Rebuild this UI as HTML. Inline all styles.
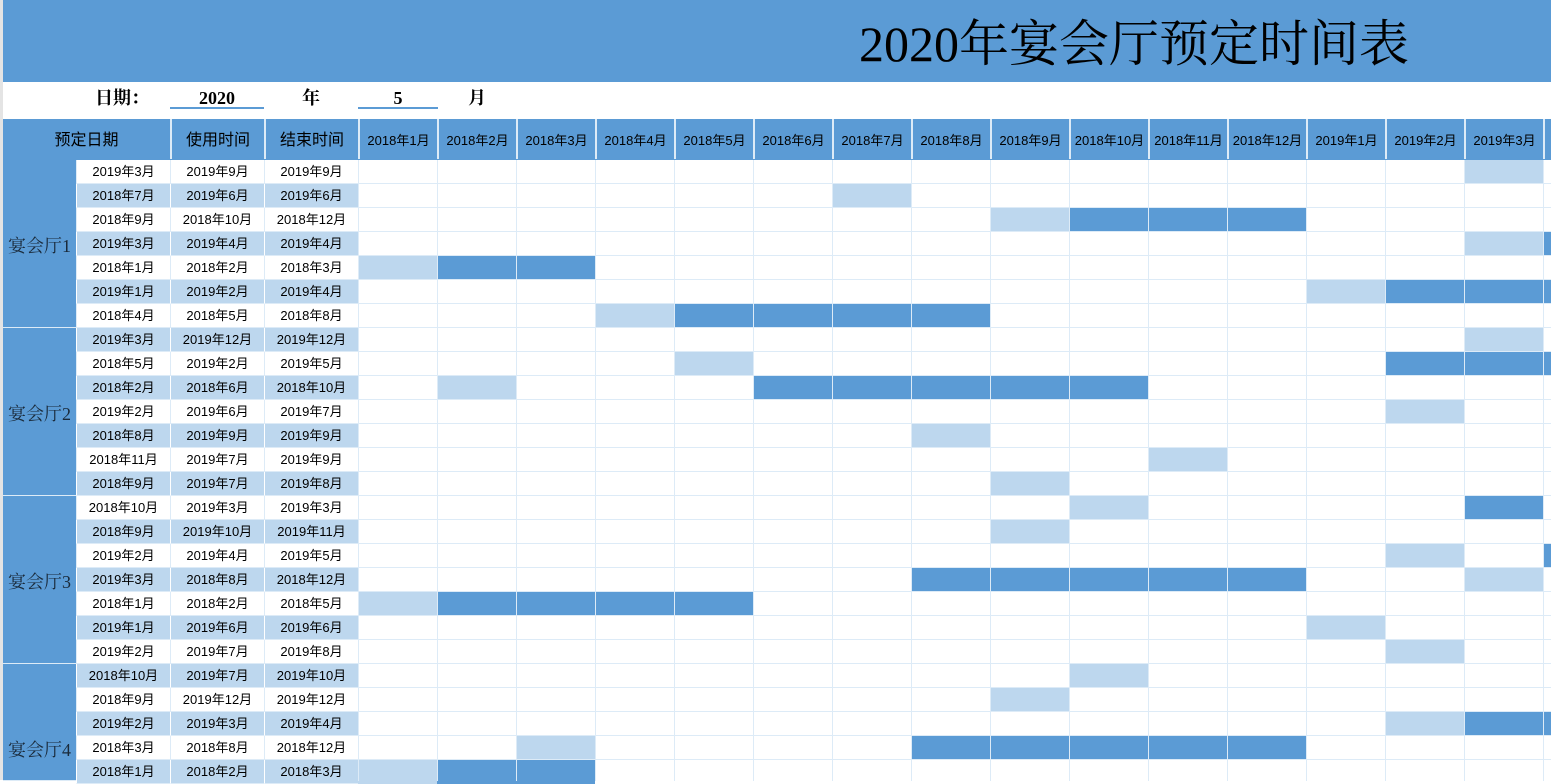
<!DOCTYPE html>
<html><head><meta charset="utf-8"><style>
*{margin:0;padding:0;box-sizing:border-box}
body{width:1551px;height:780px;overflow:hidden;background:#fff;position:relative;font-family:"Liberation Sans","Noto Sans CJK SC",sans-serif;color:#000}
.abs{position:absolute}
#title{left:0;top:0;width:1551px;height:82px;background:#5B9BD5}
#title span{position:absolute;left:859px;top:9px;font-family:"Liberation Serif","Noto Serif CJK SC",serif;font-size:50px;line-height:70px;white-space:nowrap}
#strip{left:0;top:0;width:3px;height:780px;background:#e4e4e4;z-index:5}
.d{font-family:"Liberation Serif","Noto Serif CJK SC",serif;font-weight:bold;font-size:18px;top:84px;line-height:28px}
.ul{height:2px;background:#5B9BD5;top:107px}
#hdr{left:3px;top:119px;width:1548px;height:41px;background:#5B9BD5}
.h{position:absolute;top:119px;height:40px;line-height:44px;text-align:center;font-size:16px;border-left:2px solid #DDEBF7}
.m{font-size:13px}
#gantt{left:358px;top:160px;width:1193px;height:621px}
#grid{position:absolute;left:0;top:0;width:1193px;height:621px;z-index:2;background:
repeating-linear-gradient(to right,#DDEBF7 0 1px,transparent 1px 79px),
repeating-linear-gradient(to bottom,transparent 0 23px,#DDEBF7 23px 24px)}
.b{position:absolute;width:79px;height:24px}
.L{background:#BDD7EE}.D{background:#5B9BD5}
.hall{position:absolute;left:3px;width:73px;background:#5B9BD5;border-bottom:1px solid #DDEBF7;font-family:"Liberation Serif","Noto Serif CJK SC",serif;font-size:18px;color:#1a2a3a}
.hall span{position:absolute;left:5px}
</style></head><body>
<div id="strip" class="abs"></div>
<div id="title" class="abs"><span>2020年宴会厅预定时间表</span></div>
<div class="abs d" style="left:95px">日期：</div>
<div class="abs d" style="left:170px;width:94px;text-align:center">2020</div>
<div class="abs ul" style="left:170px;width:94px"></div>
<div class="abs d" style="left:302px">年</div>
<div class="abs d" style="left:358px;width:80px;text-align:center">5</div>
<div class="abs ul" style="left:358px;width:80px"></div>
<div class="abs d" style="left:468px">月</div>
<div id="hdr" class="abs"></div>
<div class="h" style="left:3px;width:167px;border-left:none">预定日期</div>
<div class="h" style="left:170px;width:94px">使用时间</div>
<div class="h" style="left:264px;width:94px">结束时间</div>
<div class="h m" style="left:358px;width:79px">2018年1月</div>
<div class="h m" style="left:437px;width:79px">2018年2月</div>
<div class="h m" style="left:516px;width:79px">2018年3月</div>
<div class="h m" style="left:595px;width:79px">2018年4月</div>
<div class="h m" style="left:674px;width:79px">2018年5月</div>
<div class="h m" style="left:753px;width:79px">2018年6月</div>
<div class="h m" style="left:832px;width:79px">2018年7月</div>
<div class="h m" style="left:911px;width:79px">2018年8月</div>
<div class="h m" style="left:990px;width:79px">2018年9月</div>
<div class="h m" style="left:1069px;width:79px">2018年10月</div>
<div class="h m" style="left:1148px;width:79px">2018年11月</div>
<div class="h m" style="left:1227px;width:79px">2018年12月</div>
<div class="h m" style="left:1306px;width:79px">2019年1月</div>
<div class="h m" style="left:1385px;width:79px">2019年2月</div>
<div class="h m" style="left:1464px;width:79px">2019年3月</div>
<div class="h m" style="left:1543px;width:79px"></div>

<div class="hall" style="top:160px;height:168px"><span style="top:72px">宴会厅1</span></div>
<div class="hall" style="top:328px;height:168px"><span style="top:72px">宴会厅2</span></div>
<div class="hall" style="top:496px;height:168px"><span style="top:72px">宴会厅3</span></div>
<div class="hall" style="top:664px;height:117px"><span style="top:72px">宴会厅4</span></div>

<div class="abs" style="left:76px;top:160px;width:282px">
<style>.r{position:relative;height:24px}.r div{position:absolute;top:0;height:24px;line-height:24px;width:94px;text-align:center;font-size:13px;border-left:1px solid #DDEBF7;border-bottom:1px solid #DDEBF7}.r div:nth-child(1){left:0}.r div:nth-child(2){left:94px}.r div:nth-child(3){left:188px}.r.l div{background:#BDD7EE;border-left:1px solid #fff}</style>
<div class="r"><div>2019年3月</div><div>2019年9月</div><div>2019年9月</div></div>
<div class="r l"><div>2018年7月</div><div>2019年6月</div><div>2019年6月</div></div>
<div class="r"><div>2018年9月</div><div>2018年10月</div><div>2018年12月</div></div>
<div class="r l"><div>2019年3月</div><div>2019年4月</div><div>2019年4月</div></div>
<div class="r"><div>2018年1月</div><div>2018年2月</div><div>2018年3月</div></div>
<div class="r l"><div>2019年1月</div><div>2019年2月</div><div>2019年4月</div></div>
<div class="r"><div>2018年4月</div><div>2018年5月</div><div>2018年8月</div></div>
<div class="r l"><div>2019年3月</div><div>2019年12月</div><div>2019年12月</div></div>
<div class="r"><div>2018年5月</div><div>2019年2月</div><div>2019年5月</div></div>
<div class="r l"><div>2018年2月</div><div>2018年6月</div><div>2018年10月</div></div>
<div class="r"><div>2019年2月</div><div>2019年6月</div><div>2019年7月</div></div>
<div class="r l"><div>2018年8月</div><div>2019年9月</div><div>2019年9月</div></div>
<div class="r"><div>2018年11月</div><div>2019年7月</div><div>2019年9月</div></div>
<div class="r l"><div>2018年9月</div><div>2019年7月</div><div>2019年8月</div></div>
<div class="r"><div>2018年10月</div><div>2019年3月</div><div>2019年3月</div></div>
<div class="r l"><div>2018年9月</div><div>2019年10月</div><div>2019年11月</div></div>
<div class="r"><div>2019年2月</div><div>2019年4月</div><div>2019年5月</div></div>
<div class="r l"><div>2019年3月</div><div>2018年8月</div><div>2018年12月</div></div>
<div class="r"><div>2018年1月</div><div>2018年2月</div><div>2018年5月</div></div>
<div class="r l"><div>2019年1月</div><div>2019年6月</div><div>2019年6月</div></div>
<div class="r"><div>2019年2月</div><div>2019年7月</div><div>2019年8月</div></div>
<div class="r l"><div>2018年10月</div><div>2019年7月</div><div>2019年10月</div></div>
<div class="r"><div>2018年9月</div><div>2019年12月</div><div>2019年12月</div></div>
<div class="r l"><div>2019年2月</div><div>2019年3月</div><div>2019年4月</div></div>
<div class="r"><div>2018年3月</div><div>2018年8月</div><div>2018年12月</div></div>
<div class="r l"><div>2018年1月</div><div>2018年2月</div><div>2018年3月</div></div>
</div>

<div id="gantt" class="abs">
<div id="grid"></div>
<div class="b L" style="left:1106px;top:0px"></div>
<div class="b L" style="left:474px;top:24px"></div>
<div class="b L" style="left:632px;top:48px"></div>
<div class="b D" style="left:711px;top:48px;width:237px"></div>
<div class="b L" style="left:1106px;top:72px"></div>
<div class="b D" style="left:1185px;top:72px"></div>
<div class="b L" style="left:0px;top:96px"></div>
<div class="b D" style="left:79px;top:96px;width:158px"></div>
<div class="b L" style="left:948px;top:120px"></div>
<div class="b D" style="left:1027px;top:120px;width:166px"></div>
<div class="b L" style="left:237px;top:144px"></div>
<div class="b D" style="left:316px;top:144px;width:316px"></div>
<div class="b L" style="left:1106px;top:168px"></div>
<div class="b L" style="left:316px;top:192px"></div>
<div class="b D" style="left:1027px;top:192px;width:166px"></div>
<div class="b L" style="left:79px;top:216px"></div>
<div class="b D" style="left:395px;top:216px;width:395px"></div>
<div class="b L" style="left:1027px;top:240px"></div>
<div class="b L" style="left:553px;top:264px"></div>
<div class="b L" style="left:790px;top:288px"></div>
<div class="b L" style="left:632px;top:312px"></div>
<div class="b L" style="left:711px;top:336px"></div>
<div class="b D" style="left:1106px;top:336px"></div>
<div class="b L" style="left:632px;top:360px"></div>
<div class="b L" style="left:1027px;top:384px"></div>
<div class="b D" style="left:1185px;top:384px"></div>
<div class="b D" style="left:553px;top:408px;width:395px"></div>
<div class="b L" style="left:1106px;top:408px"></div>
<div class="b L" style="left:0px;top:432px"></div>
<div class="b D" style="left:79px;top:432px;width:316px"></div>
<div class="b L" style="left:948px;top:456px"></div>
<div class="b L" style="left:1027px;top:480px"></div>
<div class="b L" style="left:711px;top:504px"></div>
<div class="b L" style="left:632px;top:528px"></div>
<div class="b L" style="left:1027px;top:552px"></div>
<div class="b D" style="left:1106px;top:552px;width:87px"></div>
<div class="b L" style="left:158px;top:576px"></div>
<div class="b D" style="left:553px;top:576px;width:395px"></div>
<div class="b L" style="left:0px;top:600px"></div>
<div class="b D" style="left:79px;top:600px;width:158px"></div>
</div>
</body></html>
